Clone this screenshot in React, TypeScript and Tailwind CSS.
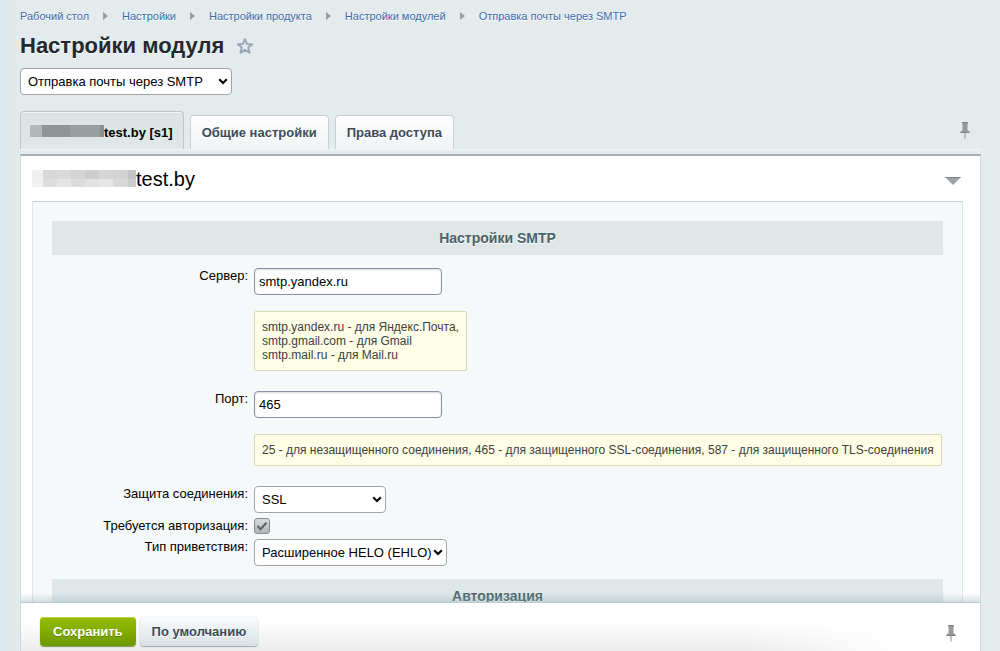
import type { ReactNode, SelectHTMLAttributes } from "react";

const crumbs = [
  "Рабочий стол",
  "Настройки",
  "Настройки продукта",
  "Настройки модулей",
  "Отправка почты через SMTP",
];

const Pin = () => (
  <svg width="10" height="17" viewBox="0 0 10 17" fill="#949b9f" aria-hidden="true">
    <path d="M2 0h6v1.5H7.5V8L9.5 9.5V11h-9V9.5L2.5 8V1.5H2z" />
    <path d="M4.4 11h1.2v5.5H4.4z" />
    <path d="M2 0h6v1.2H2zM.5 10h9v1h-9z" fill="#7f868a" />
  </svg>
);

const Star = () => (
  <svg width="18" height="18" viewBox="0 0 18 18" aria-hidden="true">
    <path
      d="M9 2l2 5 5.2.3-4 3.3 1.4 5.2L9 12.9l-4.6 2.9 1.4-5.2-4-3.3L7 7z"
      fill="#e6edf0"
      stroke="#9ca8b4"
      strokeWidth="2"
      strokeLinejoin="round"
    />
  </svg>
);

const Select = ({
  className,
  children,
  ...props
}: SelectHTMLAttributes<HTMLSelectElement>) => (
  <div className={`relative ${className}`}>
    <select
      {...props}
      className="block h-[27px] w-full appearance-none rounded border border-[#a2a5a8] bg-white pr-3.5 pl-[7px] text-[13px] text-black"
    >
      {children}
    </select>
    <svg
      className="pointer-events-none absolute top-2.5 right-1"
      width="10"
      height="7"
      viewBox="0 0 10 7"
      aria-hidden="true"
    >
      <path d="M1.2 1.2L5 5l3.8-3.8" fill="none" stroke="#000" strokeWidth="2.1" />
    </svg>
  </div>
);

const Row = ({ id, label, children }: { id: string; label: string; children: ReactNode }) => (
  <div className="flex items-start gap-1.5">
    <label htmlFor={id} className="w-[22%] shrink-0 text-right leading-4">
      {label}
    </label>
    <div className="min-w-0 flex-1">{children}</div>
  </div>
);

const TextField = ({ id, value }: { id: string; value: string }) => (
  <input
    id={id}
    type="text"
    defaultValue={value}
    className="block h-[27px] w-[188px] rounded border border-[#8b92a4] bg-white px-1 text-[13px] text-black shadow-[inset_0_1px_2px_#d5dadd]"
  />
);

const Note = ({ children }: { children: ReactNode }) => (
  <div className="mt-4 w-fit rounded-xs border border-[#d9d8b4] bg-[#fefde6] px-[7px] py-2 text-xs leading-[14px] text-[#404040]">
    {children}
  </div>
);

const SectionTitle = ({ children }: { children: ReactNode }) => (
  <h3 className="h-[34px] bg-[#dfe7e8] text-center text-sm leading-[34px] font-bold text-[#4b6267] [text-shadow:0_1px_#fff]">
    {children}
  </h3>
);

const Tab = ({ children }: { children: ReactNode }) => (
  <button
    type="button"
    role="tab"
    aria-selected={false}
    className="h-[34px] rounded-t border border-b-0 border-[#c8d1d4] bg-linear-to-b from-white to-[#f0f4f5] px-[11px] text-[13px] font-bold text-[#3f4b54] [text-shadow:0_1px_#fff]"
  >
    {children}
  </button>
);

const App = () => {
  return (
    <div className="flex h-screen flex-col overflow-hidden bg-[#e3eaec] bg-linear-to-r from-[#dfe8ea] to-[#e3ebed] to-3% pr-[19px] pl-5 font-['Liberation_Sans',Arial,sans-serif] text-[13px] text-black">
      <nav className="flex pt-2 text-[11px] leading-4" aria-label="Навигация">
        {crumbs.map((crumb, i) => (
          <div key={crumb} className="flex items-center">
            {i > 0 && (
              <svg className="mx-3.5" width="5" height="8" viewBox="0 0 5 8" aria-hidden="true">
                <path d="M0 0l5 4-5 4z" fill="#9aa1a4" />
              </svg>
            )}
            <a href="#" className="text-[#3f6aaa] [text-shadow:0_1px_#fff]">
              {crumb}
            </a>
          </div>
        ))}
      </nav>

      <div className="mt-2 flex h-7 items-center gap-3">
        <h1 className="text-[22px] leading-7 font-bold text-[#23282d] [text-shadow:0_1px_#fff]">
          Настройки модуля
        </h1>
        <button type="button" aria-label="Добавить в избранное">
          <Star />
        </button>
      </div>

      <Select className="mt-2 w-[212px]" aria-label="Модуль">
        <option>Отправка почты через SMTP</option>
      </Select>

      <div className="mt-4 flex items-start justify-between">
        <div role="tablist" className="flex items-end gap-1.5">
          <button
            type="button"
            role="tab"
            aria-selected
            className="flex h-[38px] items-center rounded-t border border-b-0 border-[#bcc7ca] bg-linear-to-b from-[#dbe3e5] to-[#e0e7e9] pt-1 pr-2.5 pl-[9px] font-bold shadow-[inset_0_1px_#f2f6f7]"
          >
            <span className="mb-1 flex h-3" aria-hidden="true">
              <span className="w-3 bg-[#b2b7b9]" />
              <span className="w-7 bg-[#8f9596]" />
              <span className="w-[30px] bg-[#9a9fa2]" />
              <span className="w-1 bg-[#898f91]" />
            </span>
            test.by [s1]
          </button>
          <Tab>Общие настройки</Tab>
          <Tab>Права доступа</Tab>
        </div>
        <button type="button" aria-label="Закрепить вкладки" className="mt-[11px] mr-[11px]">
          <Pin />
        </button>
      </div>
      <div className="h-[5px] shrink-0 border-t border-[#f2f6f7] bg-[#e6eced]" />

      <div className="flex min-h-0 flex-1 flex-col border-x border-t-2 border-x-[#cdd8dc] border-t-[#a5b0b3] bg-white">
        <div className="min-h-0 flex-1 overflow-y-auto pr-[17px] pl-[11px] [scrollbar-width:none]">
          <div className="flex h-[45px] items-center justify-between">
            <div className="flex items-center">
              <div className="grid h-[17px] w-[104px] grid-cols-[11px_14px_14px_14px_14px_14px_15px_8px]" aria-hidden="true">
                <span className="bg-[#f0f0f0]" />
                <span className="bg-[#d8d8d8]" />
                <span className="bg-[#dadada]" />
                <span className="bg-[#d4d4d4]" />
                <span className="bg-[#cdcdcd]" />
                <span className="bg-[#d6d6d6]" />
                <span className="bg-[#d2d2d2]" />
                <span className="bg-[#c3c3c3]" />
                <span className="bg-[#f1f1f1]" />
                <span className="bg-[#dddddd]" />
                <span className="bg-[#e4e4e4]" />
                <span className="bg-[#dcdcdc]" />
                <span className="bg-[#e2e2e2]" />
                <span className="bg-[#e6e6e6]" />
                <span className="bg-[#d8d8d8]" />
                <span className="bg-[#cccccc]" />
              </div>
              <h2 className="text-xl leading-6">test.by</h2>
            </div>
            <button type="button" aria-label="Свернуть" className="mt-1 mr-0.5">
              <svg width="16" height="8" viewBox="0 0 16 8" aria-hidden="true">
                <path d="M0 0h16L8 8z" fill="#9aa2a6" />
                <path d="M0 0h16l-1 1H1z" fill="#7b8387" />
              </svg>
            </button>
          </div>

          <form className="border border-[#dde6e9] border-t-[#c3ced1] bg-[#f5f9fa] px-[19px] pt-[19px]">
            <SectionTitle>Настройки SMTP</SectionTitle>
            <div className="flex flex-col gap-5 pt-[13px] pb-[13px]">
              <Row id="server" label="Сервер:">
                <TextField id="server" value="smtp.yandex.ru" />
                <Note>
                  smtp.yandex.ru - для Яндекс.Почта,
                  <br />
                  smtp.gmail.com - для Gmail
                  <br />
                  smtp.mail.ru - для Mail.ru
                </Note>
              </Row>
              <Row id="port" label="Порт:">
                <TextField id="port" value="465" />
                <Note>
                  25 - для незащищенного соединения, 465 - для защищенного SSL-соединения, 587 - для
                  защищенного TLS-соединения
                </Note>
              </Row>
              <div className="flex flex-col gap-[5px]">
                <Row id="secure" label="Защита соединения:">
                  <Select id="secure" className="w-[132px]">
                    <option>SSL</option>
                    <option>TLS</option>
                  </Select>
                </Row>
                <Row id="auth" label="Требуется авторизация:">
                  <div className="relative size-4">
                    <input
                      id="auth"
                      type="checkbox"
                      defaultChecked
                      className="peer block size-4 appearance-none rounded-[3px] border border-[#858c91] bg-linear-to-b from-[#d9dddf] to-[#adb4b8]"
                    />
                    <svg
                      className="pointer-events-none absolute inset-0 hidden peer-checked:block"
                      width="16"
                      height="16"
                      viewBox="0 0 16 16"
                      aria-hidden="true"
                    >
                      <path d="M3.5 8l3 3.2 6-6.4" fill="none" stroke="#5a6166" strokeWidth="2" />
                    </svg>
                  </div>
                </Row>
                <Row id="hello" label="Тип приветствия:">
                  <Select id="hello" className="w-[193px]">
                    <option>Расширенное HELO (EHLO)</option>
                  </Select>
                </Row>
              </div>
            </div>
            <SectionTitle>Авторизация</SectionTitle>
          </form>
        </div>

        <div className="relative flex shrink-0 items-center justify-between border-t border-[#d5e0e4] bg-[linear-gradient(to_right,transparent_75%,white_92%),linear-gradient(to_bottom,white_40%,#ebebeb)] pt-3.5 pr-6 pb-[5px] pl-[19px]">
          <div className="pointer-events-none absolute inset-x-0 bottom-full h-2.5 bg-linear-to-t from-[#8fa9b5]/40 to-transparent" />
          <div className="flex gap-1">
            <button
              type="button"
              className="h-[29px] rounded bg-linear-to-b from-[#95bd00] to-[#6f9800] px-[13px] font-bold text-white shadow-[inset_0_1px_#b3d33c,0_1px_1px_#7c8f55] [text-shadow:0_1px_#5f8200]"
            >
              Сохранить
            </button>
            <button
              type="button"
              className="h-[29px] rounded bg-linear-to-b from-[#fbfcfd] to-[#d8e1e5] px-3 font-bold text-[#3f4b54] shadow-[0_0_1px_#9daab0,0_1px_1px_#9daab0] [text-shadow:0_1px_#fff]"
            >
              По умолчанию
            </button>
          </div>
          <button type="button" aria-label="Закрепить панель" className="mt-1">
            <Pin />
          </button>
        </div>
      </div>
    </div>
  );
};

export default App;
